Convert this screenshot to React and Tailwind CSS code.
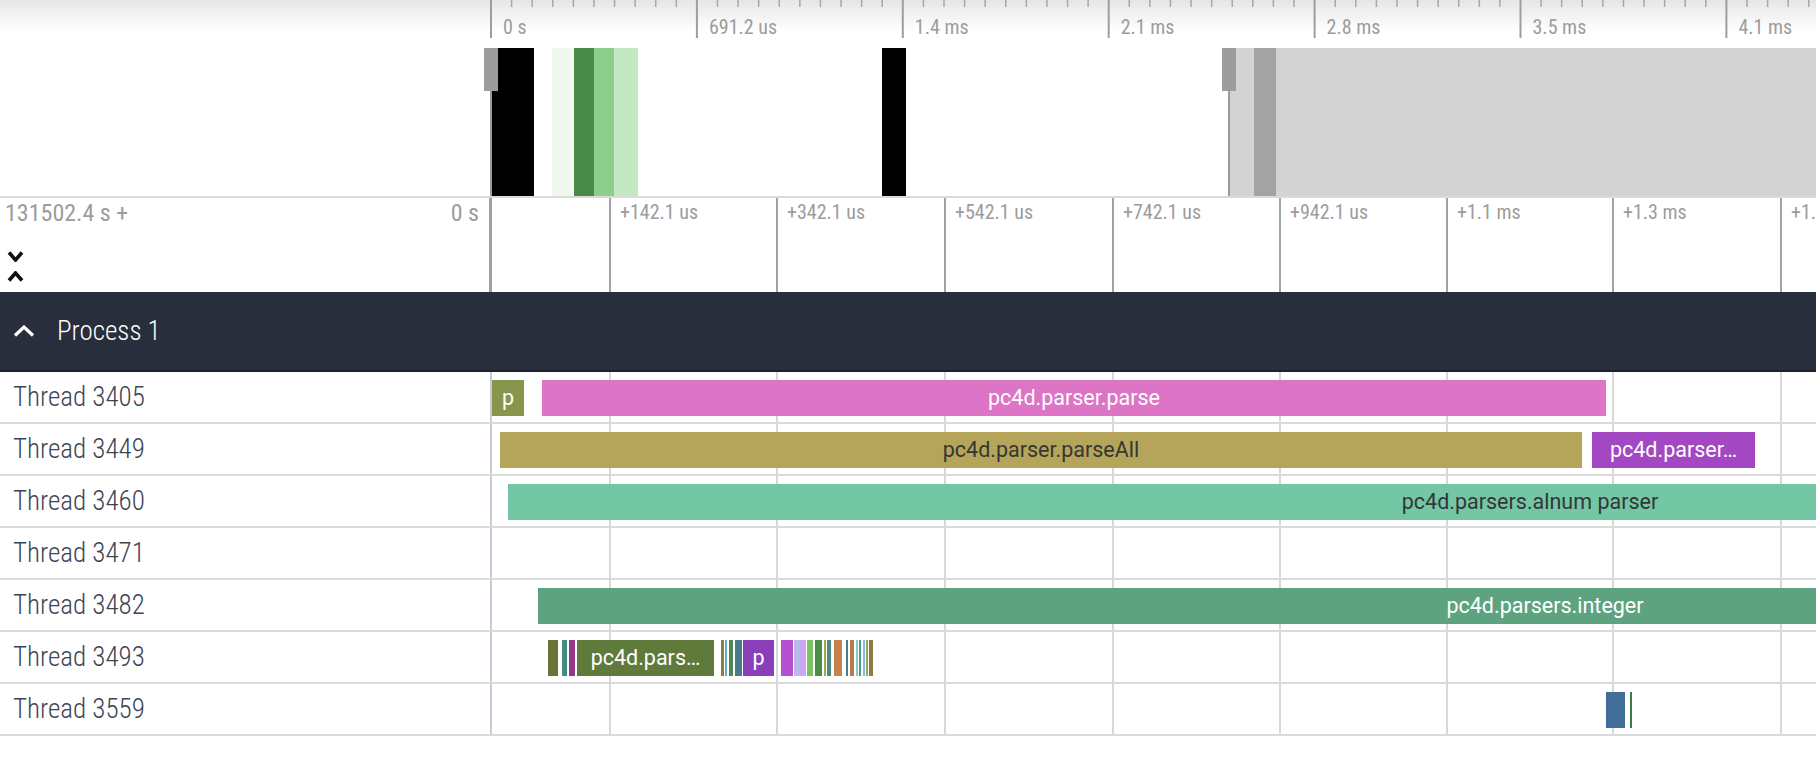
import React from "react";

// px offsets are relative to the start of the timeline column (x = 490)
const topMarks = ["0 s", "691.2 us", "1.4 ms", "2.1 ms", "2.8 ms", "3.5 ms", "4.1 ms"];
const TOP_STEP = 205.9;

const rulerMarks = ["+142.1 us", "+342.1 us", "+542.1 us", "+742.1 us", "+942.1 us", "+1.1 ms", "+1.3 ms", "+1.5 ms"];
const gridX = [120, 287, 455, 623, 790, 957, 1123, 1291];

const overview = [
  { left: 2, width: 42, color: "#000000" },
  { left: 62, width: 22, color: "#f1f8f0" },
  { left: 84, width: 20, color: "#4a8a48" },
  { left: 104, width: 20, color: "#8dcf8a" },
  { left: 124, width: 24, color: "#c4e8c2" },
  { left: 392, width: 24, color: "#000000" },
  { left: 739, width: 1100, color: "#d3d3d3" },
  { left: 764, width: 22, color: "#a3a3a3" },
];

const threads = [
  {
    name: "Thread 3405",
    bars: [
      { left: 2, width: 32, color: "#88964b", label: "p" },
      { left: 52, width: 1064, color: "#dd74c6", label: "pc4d.parser.parse" },
    ],
  },
  {
    name: "Thread 3449",
    bars: [
      { left: 10, width: 1082, color: "#b4a55a", label: "pc4d.parser.parseAll", dark: true },
      { left: 1102, width: 163, color: "#a347c2", label: "pc4d.parser…" },
    ],
  },
  {
    name: "Thread 3460",
    bars: [{ left: 18, width: 2044, color: "#74c7a5", label: "pc4d.parsers.alnum parser", dark: true }],
  },
  { name: "Thread 3471", bars: [] },
  {
    name: "Thread 3482",
    bars: [{ left: 48, width: 2014, color: "#5ea37f", label: "pc4d.parsers.integer" }],
  },
  {
    name: "Thread 3493",
    bars: [
      { left: 58, width: 10, color: "#6b7236" },
      { left: 72, width: 1.5, color: "#4c8c84" },
      { left: 74, width: 3, color: "#3e8a7c" },
      { left: 79, width: 6, color: "#97368b" },
      { left: 87, width: 137, color: "#5f7a3b", label: "pc4d.pars…" },
      { left: 231, width: 3, color: "#8c7c42" },
      { left: 235, width: 2, color: "#6aa8c8" },
      { left: 239, width: 4, color: "#4b8a58" },
      { left: 245, width: 7, color: "#4b7b8a" },
      { left: 253, width: 31, color: "#8a3fba", label: "p" },
      { left: 291, width: 12, color: "#b550d0" },
      { left: 304, width: 6, color: "#b9b9ea" },
      { left: 310, width: 6, color: "#c8a8ee" },
      { left: 317, width: 6, color: "#7dc262" },
      { left: 325, width: 7, color: "#4a8c48" },
      { left: 334, width: 1.5, color: "#a4a452" },
      { left: 337, width: 4, color: "#4a8a80" },
      { left: 344, width: 8, color: "#c4824c" },
      { left: 356, width: 2, color: "#4b7b8a" },
      { left: 360, width: 4, color: "#b27c4c" },
      { left: 366, width: 1.5, color: "#84ccc4" },
      { left: 369, width: 2, color: "#4a9a9a" },
      { left: 373, width: 1.5, color: "#84bcdc" },
      { left: 376, width: 1.5, color: "#a4a452" },
      { left: 379, width: 4, color: "#8c7c42" },
    ],
  },
  {
    name: "Thread 3559",
    bars: [
      { left: 1116, width: 19, color: "#416d99" },
      { left: 1140, width: 2, color: "#3d7a4a" },
    ],
  },
];

function Chevron({ up, className, color = "#111", w = 16, h = 9, stroke = 3 }) {
  const pts = up ? `2,${h - 1.5} ${w / 2},2 ${w - 2},${h - 1.5}` : `2,1.5 ${w / 2},${h - 2} ${w - 2},1.5`;
  return (
    <svg width={w} height={h} viewBox={`0 0 ${w} ${h}`} className={className}>
      <polyline points={pts} fill="none" stroke={color} strokeWidth={stroke} strokeLinecap="butt" />
    </svg>
  );
}

function TopTicks() {
  const minors = [];
  for (let i = 0; i < 66; i++) minors.push(1 + i * (TOP_STEP / 10));
  return (
    <svg className="absolute inset-0" width="1326" height="48">
      {minors.map((x, i) =>
        i % 10 === 0 ? (
          <line key={i} x1={x} x2={x} y1={0} y2={38} stroke="#9e9e9e" strokeWidth="2" />
        ) : (
          <line key={i} x1={x} x2={x} y1={0} y2={7} stroke="#a8a8a8" strokeWidth="1.5" />
        )
      )}
    </svg>
  );
}

export default function App() {
  return (
    <div className="w-full h-[768px] overflow-hidden bg-white font-['Roboto','Liberation_Sans',sans-serif]">
      {/* top ruler */}
      <div className="flex h-[48px] bg-[linear-gradient(to_bottom,#e6e6e6,#ffffff_65%)]">
        <div className="w-[490px] shrink-0"></div>
        <div className="relative flex-1">
          <TopTicks />
          {topMarks.map((m, i) => (
            <span
              key={m}
              className="absolute top-[16px] text-[20px] leading-[22px] [font-stretch:condensed] text-[#9c9c9c] whitespace-nowrap"
              style={{ left: 13 + i * TOP_STEP }}
            >
              {m}
            </span>
          ))}
        </div>
      </div>

      {/* overview */}
      <div className="flex h-[150px] border-b-2 border-[#dadada]">
        <div className="w-[490px] shrink-0"></div>
        <div className="relative flex-1">
          {overview.map((b, i) => (
            <div key={i} className="absolute top-0 h-full" style={{ left: b.left, width: b.width, background: b.color }} />
          ))}
          <div className="absolute top-0 h-full w-[2px] left-0 bg-[#9a9a9a]" />
          <div className="absolute top-0 h-[43px] w-[14px] left-[-6px] bg-[#9d9d9d]" />
          <div className="absolute top-0 h-full w-[2px] left-[738px] bg-[#9a9a9a]" />
          <div className="absolute top-0 h-[43px] w-[14px] left-[732px] bg-[#9d9d9d]" />
        </div>
      </div>

      {/* time ruler */}
      <div className="flex h-[94px]">
        <div className="w-[490px] shrink-0 flex flex-col pl-[5px] pr-[11px] pt-[2px]">
          <div className="flex justify-between text-[24px] leading-[27px] [font-stretch:condensed] text-[#9c9c9c]">
            <span>131502.4 s +</span>
            <span>0 s</span>
          </div>
          <div className="flex flex-col gap-[9px] mt-[24px] pl-[2px]">
            <Chevron className="block" w={17} h={11} stroke={3.6} />
            <Chevron up className="block" w={17} h={11} stroke={3.6} />
          </div>
        </div>
        <div className="relative flex-1">
          <div className="absolute top-0 h-full left-[-1px] w-[3px] bg-[#a0a0a0]" />
          {gridX.map((x, i) => (
            <React.Fragment key={x}>
              <div className="absolute top-0 h-full w-[2px] bg-[#a3a3a3]" style={{ left: x - 1 }} />
              <span
                className="absolute top-[3px] text-[20px] leading-[22px] [font-stretch:condensed] text-[#9c9c9c] whitespace-nowrap"
                style={{ left: x + 10 }}
              >
                {rulerMarks[i]}
              </span>
            </React.Fragment>
          ))}
        </div>
      </div>

      {/* process header */}
      <div className="flex items-center h-[80px] bg-[#282e3b] border-b-2 border-[#1d222b] pl-[13px]">
        <Chevron up color="#ffffff" w={22} h={12} stroke={3.2} />
        <span className="ml-[22px] text-[27px] font-light [font-stretch:condensed] text-white">Process 1</span>
      </div>

      {/* threads */}
      <div className="relative">
        <div className="absolute top-0 bottom-0 left-[490px] right-0 pointer-events-none">
          <div className="absolute top-0 h-full left-0 w-[2px] bg-[#c8cad9]" />
          {gridX.map((x) => (
            <div key={x} className="absolute top-0 h-full w-[2px] bg-[#d8d8d8]" style={{ left: x - 1 }} />
          ))}
        </div>
        {threads.map((t) => (
          <div key={t.name} className="relative flex h-[52px] border-b-2 border-[#dadada]">
            <div className="w-[490px] shrink-0 flex items-center pl-[13px] text-[27px] font-light [font-stretch:condensed] text-[#3d4555]">
              {t.name}
            </div>
            <div className="relative flex-1">
              {t.bars.map((b, i) => (
                <div
                  key={i}
                  className={`absolute top-[8px] h-[36px] flex items-center justify-center overflow-hidden whitespace-nowrap text-[21.5px] ${
                    b.dark ? "text-[#363636]" : "text-white"
                  }`}
                  style={{ left: b.left, width: b.width, background: b.color }}
                >
                  {b.label}
                </div>
              ))}
            </div>
          </div>
        ))}
      </div>
    </div>
  );
}
